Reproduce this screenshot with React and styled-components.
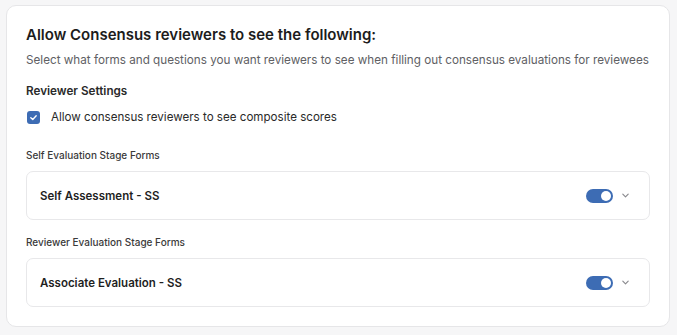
import React from 'react';
import styled, { createGlobalStyle } from 'styled-components';

const Global = createGlobalStyle`
  html, body { margin: 0; padding: 0; background: #f6f6f7; }
  body { font-family: Inter, "Liberation Sans", sans-serif; color: #1f1f1f; }
  * { box-sizing: border-box; }
`;

const Page = styled.div`
  width: 677px;
  height: 335px;
  padding: 5px 7px 8px 6px;
`;

const Card = styled.div`
  background: #fff;
  border: 1px solid #e6e6e8;
  border-radius: 10px;
  height: 100%;
  padding: 19px 19px 0 19px;
`;

const Title = styled.h2`
  margin: 0;
  font-size: 15px;
  font-weight: 600;
  color: #1c1c1c;
  line-height: 20px;
`;

const Subtitle = styled.p`
  margin: 7px 0 0;
  font-size: 11.7px;
  color: #606064;
  line-height: 16px;
  white-space: nowrap;
`;

const SectionTitle = styled.h3`
  margin: 15px 0 0;
  font-size: 11.7px;
  font-weight: 600;
  color: #2a2a2a;
  line-height: 16px;
`;

const CheckRow = styled.label`
  display: flex;
  align-items: center;
  gap: 11px;
  margin-top: 10px;
  height: 16px;
  font-size: 11.6px;
  color: #2a2a2a;
  padding-left: 1px;
`;

const Checkbox = styled.span`
  width: 13px;
  height: 13px;
  border-radius: 3px;
  background: #3d6cb4;
  display: flex;
  align-items: center;
  justify-content: center;
`;

const GroupLabel = styled.div`
  margin-top: ${p => p.$top}px;
  font-size: 10px;
  font-weight: 500;
  color: #3a3a3a;
  line-height: 14px;
`;

const FormBox = styled.div`
  margin-top: 9px;
  height: 49px;
  border: 1px solid #e8e8ea;
  border-radius: 7px;
  display: flex;
  align-items: center;
  padding: 0 19px 0 13px;
`;

const FormName = styled.span`
  flex: 1;
  font-size: 11.5px;
  font-weight: 600;
  color: #1f1f1f;
`;

const Toggle = styled.span`
  width: 27px;
  height: 14px;
  border-radius: 7px;
  background: #3d6cb4;
  display: flex;
  align-items: center;
  justify-content: flex-end;
  padding: 0 2px;
  &::after {
    content: '';
    width: 10px;
    height: 10px;
    border-radius: 50%;
    background: #fff;
  }
`;

const Chevron = styled.svg`
  margin-left: 8px;
  width: 9px;
  height: 9px;
`;

const FormRow = ({ name }) => (
  <FormBox>
    <FormName>{name}</FormName>
    <Toggle />
    <Chevron viewBox="0 0 10 10">
      <path d="M2 3.5 L5 6.5 L8 3.5" fill="none" stroke="#8a8a8e" strokeWidth="1.3" strokeLinecap="round" strokeLinejoin="round" />
    </Chevron>
  </FormBox>
);

export default function App() {
  return (
    <Page>
      <Global />
      <Card>
        <Title>Allow Consensus reviewers to see the following:</Title>
        <Subtitle>Select what forms and questions you want reviewers to see when filling out consensus evaluations for reviewees</Subtitle>
        <SectionTitle>Reviewer Settings</SectionTitle>
        <CheckRow>
          <Checkbox>
            <svg width="9" height="9" viewBox="0 0 10 10">
              <path d="M2 5.2 L4.2 7.2 L8 3" fill="none" stroke="#fff" strokeWidth="1.5" strokeLinecap="round" strokeLinejoin="round" />
            </svg>
          </Checkbox>
          Allow consensus reviewers to see composite scores
        </CheckRow>
        <GroupLabel $top={23}>Self Evaluation Stage Forms</GroupLabel>
        <FormRow name="Self Assessment - SS" />
        <GroupLabel $top={15}>Reviewer Evaluation Stage Forms</GroupLabel>
        <FormRow name="Associate Evaluation - SS" />
      </Card>
    </Page>
  );
}
